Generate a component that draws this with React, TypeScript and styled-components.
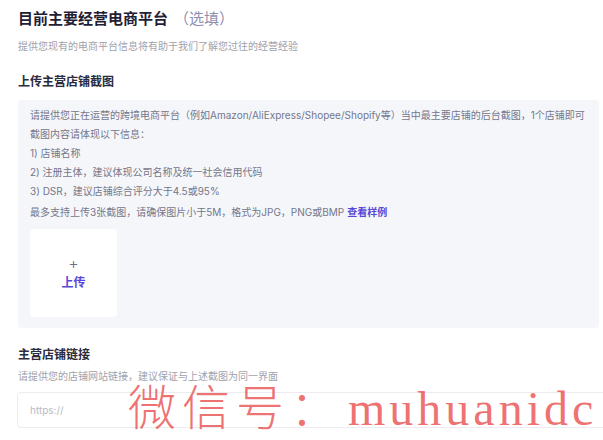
import * as React from "react";
import styled, { createGlobalStyle } from "styled-components";

const GlobalStyle = createGlobalStyle`
  html, body {
    margin: 0;
    padding: 0;
    background: #ffffff;
  }
  body {
    font-family: "Inter", "Noto Sans CJK SC", sans-serif;
    color: #1f2033;
  }
`;

const Page = styled.div`
  position: relative;
  width: 603px;
  height: 440px;
  overflow: hidden;
  padding: 8px 0 0 18px;
  box-sizing: border-box;
`;

const Title = styled.h1`
  margin: 0;
  font-size: 15px;
  line-height: 22px;
  font-weight: 700;
  color: #1f2033;
`;

const Optional = styled.span`
  font-weight: 400;
  color: #8c90b0;
  margin-left: 6px;
`;

const Hint = styled.p<{ $top?: number }>`
  margin: ${(p) => p.$top ?? 0}px 0 0;
  font-size: 10px;
  line-height: 16px;
  color: #a0a2ad;
`;

const Label = styled.h2<{ $top: number }>`
  margin: ${(p) => p.$top}px 0 0;
  font-size: 12px;
  line-height: 18px;
  font-weight: 700;
  color: #2a2b3d;
`;

const Panel = styled.div`
  margin: 9px 4px 0 0;
  padding: 6px 12px 11px;
  background: #f5f6fa;
  border-radius: 4px;
`;

const PanelLine = styled.div<{ $gap?: number }>`
  font-size: 10px;
  line-height: 19px;
  color: #74768a;
  margin-top: ${(p) => p.$gap ?? 0}px;
  white-space: nowrap;
`;

const Link = styled.a`
  color: #5847d8;
  font-weight: 700;
  text-decoration: none;
  margin-left: 3px;
  cursor: pointer;
`;

const UploadBox = styled.div`
  margin-top: 7px;
  width: 87px;
  height: 88px;
  background: #ffffff;
  border-radius: 4px;
  display: flex;
  flex-direction: column;
  align-items: center;
  justify-content: center;
  gap: 3px;
  cursor: pointer;
`;

const Plus = styled.span`
  font-size: 16px;
  line-height: 16px;
  font-weight: 300;
  color: #6f7080;
`;

const UploadText = styled.span`
  font-size: 12px;
  line-height: 18px;
  font-weight: 700;
  color: #5847d8;
`;

const Input = styled.input`
  display: block;
  margin: 8px 0 0 -1px;
  width: 600px;
  height: 36px;
  box-sizing: border-box;
  border: 1px solid #ececf0;
  border-radius: 4px;
  padding: 0 12px;
  font-family: "Inter", "Noto Sans CJK SC", sans-serif;
  font-size: 10px;
  color: #333;
  outline: none;

  &::placeholder {
    color: #b9bac4;
  }
`;

const Watermark = styled.div`
  position: absolute;
  left: 128px;
  top: 374px;
  display: flex;
  align-items: baseline;
  font-size: 48px;
  line-height: 60px;
  color: rgba(232, 60, 60, 0.72);
  white-space: nowrap;
  pointer-events: none;
`;

const WmCjk = styled.span`
  font-family: "Noto Sans CJK SC", sans-serif;
  font-weight: 300;
  letter-spacing: 6px;
`;

const WmLatin = styled.span`
  font-family: "Liberation Serif", serif;
  letter-spacing: 4px;
  margin-left: 4px;
`;

export default function App() {
  return (
    <>
      <GlobalStyle />
      <Page>
        <Title>
          目前主要经营电商平台<Optional>（选填）</Optional>
        </Title>
        <Hint $top={8}>提供您现有的电商平台信息将有助于我们了解您过往的经营经验</Hint>
        <Label $top={19}>上传主营店铺截图</Label>
        <Panel>
          <PanelLine>
            请提供您正在运营的跨境电商平台（例如Amazon/AliExpress/Shopee/Shopify等）当中最主要店铺的后台截图，1个店铺即可
          </PanelLine>
          <PanelLine>截图内容请体现以下信息：</PanelLine>
          <PanelLine>1) 店铺名称</PanelLine>
          <PanelLine>2) 注册主体，建议体现公司名称及统一社会信用代码</PanelLine>
          <PanelLine>3) DSR，建议店铺综合评分大于4.5或95%</PanelLine>
          <PanelLine $gap={2}>
            最多支持上传3张截图，请确保图片小于5M，格式为JPG，PNG或BMP
            <Link>查看样例</Link>
          </PanelLine>
          <UploadBox>
            <Plus>+</Plus>
            <UploadText>上传</UploadText>
          </UploadBox>
        </Panel>
        <Label $top={18}>主营店铺链接</Label>
        <Hint $top={4}>请提供您的店铺网站链接，建议保证与上述截图为同一界面</Hint>
        <Input placeholder="https://" />
        <Watermark>
          <WmCjk>微信号：</WmCjk>
          <WmLatin>muhuanidc</WmLatin>
        </Watermark>
      </Page>
    </>
  );
}
